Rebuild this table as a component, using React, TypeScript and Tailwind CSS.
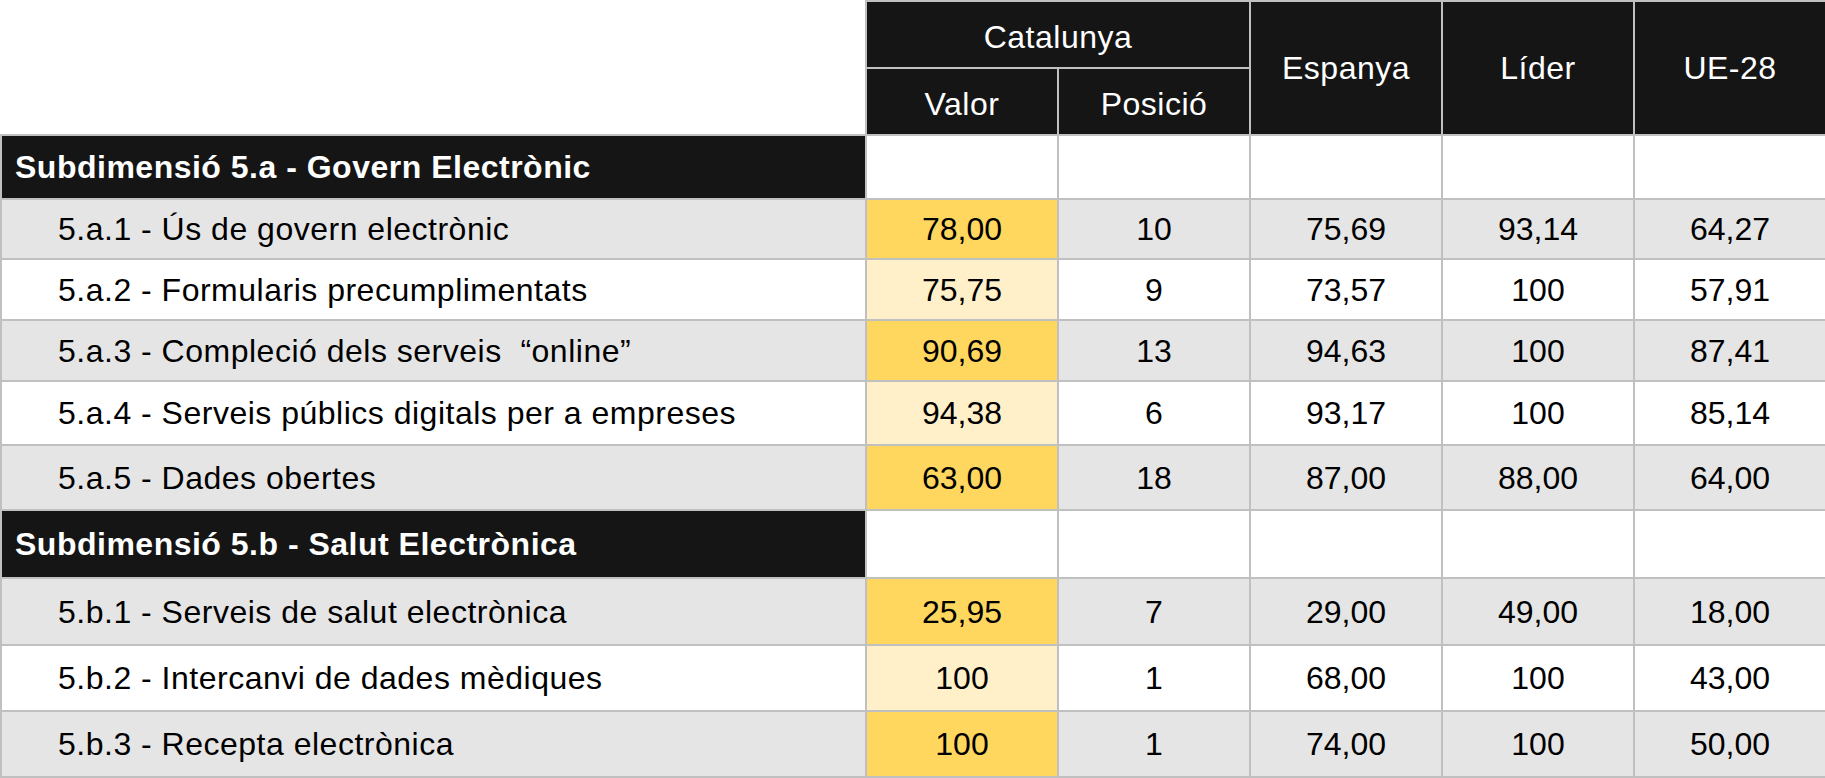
import React from "react";

type Row = {
  label: string;
  valor: string;
  strong: boolean;
  pos: string;
  espanya: string;
  lider: string;
  ue: string;
  h: string;
};

const groups: { title: string; h: string; rows: Row[] }[] = [
  {
    title: "Subdimensió 5.a - Govern Electrònic",
    h: "h-[64px]",
    rows: [
      { label: "5.a.1 - Ús de govern electrònic", valor: "78,00", strong: true, pos: "10", espanya: "75,69", lider: "93,14", ue: "64,27", h: "h-[60px]" },
      { label: "5.a.2 - Formularis precumplimentats", valor: "75,75", strong: false, pos: "9", espanya: "73,57", lider: "100", ue: "57,91", h: "h-[61px]" },
      { label: "5.a.3 - Compleció dels serveis \u00a0“online”", valor: "90,69", strong: true, pos: "13", espanya: "94,63", lider: "100", ue: "87,41", h: "h-[61px]" },
      { label: "5.a.4 - Serveis públics digitals per a empreses", valor: "94,38", strong: false, pos: "6", espanya: "93,17", lider: "100", ue: "85,14", h: "h-[64px]" },
      { label: "5.a.5 - Dades obertes", valor: "63,00", strong: true, pos: "18", espanya: "87,00", lider: "88,00", ue: "64,00", h: "h-[65px]" },
    ],
  },
  {
    title: "Subdimensió 5.b - Salut Electrònica",
    h: "h-[68px]",
    rows: [
      { label: "5.b.1 - Serveis de salut electrònica", valor: "25,95", strong: true, pos: "7", espanya: "29,00", lider: "49,00", ue: "18,00", h: "h-[67px]" },
      { label: "5.b.2 - Intercanvi de dades mèdiques", valor: "100", strong: false, pos: "1", espanya: "68,00", lider: "100", ue: "43,00", h: "h-[66px]" },
      { label: "5.b.3 - Recepta electrònica", valor: "100", strong: true, pos: "1", espanya: "74,00", lider: "100", ue: "50,00", h: "h-[66px]" },
    ],
  },
];

const cell = "border-2 border-[#c0c0c0] text-center align-middle";
const head = `${cell} bg-[#151515] text-white font-normal tracking-[0.5px]`;

export default function App() {
  return (
    <div className="w-[1825px] h-[778px] bg-white overflow-hidden">
      <table
        className="table-fixed border-collapse w-[1825px] text-[32px] text-black"
        style={{ fontFamily: '"Liberation Sans", Arial, sans-serif' }}
      >
        <colgroup>
          <col className="w-[865px]" />
          <col className="w-[192px]" />
          <col className="w-[192px]" />
          <col className="w-[192px]" />
          <col className="w-[192px]" />
          <col className="w-[192px]" />
        </colgroup>
        <thead>
          <tr className="h-[67px]">
            <th rowSpan={2} className="border-0 bg-white" />
            <th colSpan={2} className={`${head} pt-1`}>
              Catalunya
            </th>
            <th rowSpan={2} className={head}>
              Espanya
            </th>
            <th rowSpan={2} className={head}>
              Líder
            </th>
            <th rowSpan={2} className={head}>
              UE-28
            </th>
          </tr>
          <tr className="h-[67px]">
            <th className={`${head} pt-1`}>Valor</th>
            <th className={`${head} pt-1`}>Posició</th>
          </tr>
        </thead>
        <tbody>
          {groups.map((g) => (
            <React.Fragment key={g.title}>
              <tr className={g.h}>
                <td className="border-2 border-[#c0c0c0] bg-[#151515] text-white font-bold text-left pl-[13px] align-middle tracking-[0.5px]">
                  {g.title}
                </td>
                <td className={`${cell} bg-white`} />
                <td className={`${cell} bg-white`} />
                <td className={`${cell} bg-white`} />
                <td className={`${cell} bg-white`} />
                <td className={`${cell} bg-white`} />
              </tr>
              {g.rows.map((r) => {
                const bg = r.strong ? "bg-[#e5e5e5]" : "bg-white";
                return (
                  <tr key={r.label} className={r.h}>
                    <td className={`border-2 border-[#c0c0c0] ${bg} text-left pl-[56px] align-middle whitespace-pre tracking-[0.5px]`}>
                      {r.label}
                    </td>
                    <td className={`${cell} ${r.strong ? "bg-[#ffd75e]" : "bg-[#fff0c9]"}`}>{r.valor}</td>
                    <td className={`${cell} ${bg}`}>{r.pos}</td>
                    <td className={`${cell} ${bg}`}>{r.espanya}</td>
                    <td className={`${cell} ${bg}`}>{r.lider}</td>
                    <td className={`${cell} ${bg}`}>{r.ue}</td>
                  </tr>
                );
              })}
            </React.Fragment>
          ))}
        </tbody>
      </table>
    </div>
  );
}
